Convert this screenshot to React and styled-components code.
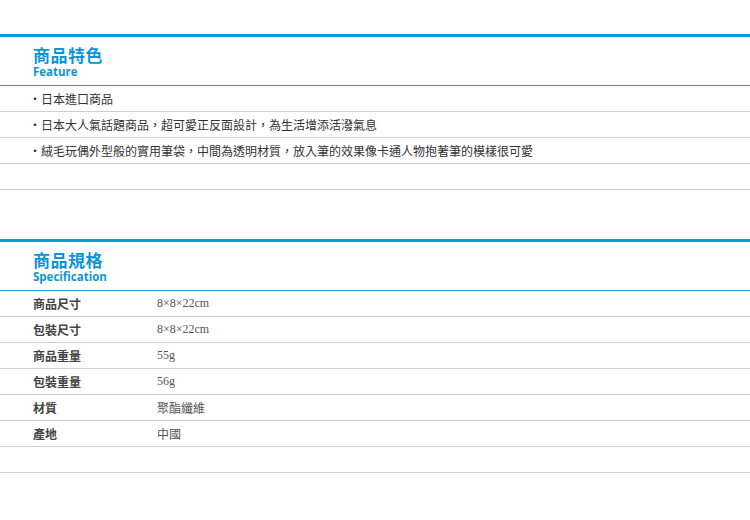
import React from "react";
import styled, { createGlobalStyle } from "styled-components";

const G = createGlobalStyle`
  body { margin: 0; background: #fff; font-family: "Noto Sans CJK TC", "Noto Sans", sans-serif; }
`;
const Wrap = styled.div` padding-top: 34px; `;
const Section = styled.section` margin-bottom: ${p => p.$mb}px; `;
const Head = styled.div`
  border-top: 3px solid #0a9bdc;
  border-bottom: 1px solid #1a9bd6;
  height: 48px;
  padding-left: 33px;
  display: flex; flex-direction: column; justify-content: center;
  color: #0a95d8;
`;
const Title = styled.div` font-size: 17px; font-weight: 700; line-height: 21px; letter-spacing: 0.5px; `;
const Sub = styled.div` font-size: 11.5px; font-weight: 700; line-height: 14px; font-family: "Open Sans", "Noto Sans", sans-serif; `;
const Row = styled.div`
  height: 25px; border-bottom: 1px solid #cfcfcf;
  display: flex; align-items: center; padding-left: ${p => p.$pl}px;
  font-size: 12px; color: #333;
`;
const Label = styled.div` width: 124px; font-weight: 700; color: #444; `;
const Value = styled.div` font-family: ${p => p.$serif ? '"Liberation Serif", serif' : '"Noto Sans CJK TC", sans-serif'}; color: #555; font-size: 12px; `;

const feats = ["日本進口商品", "日本大人氣話題商品，超可愛正反面設計，為生活增添活潑氣息", "絨毛玩偶外型般的實用筆袋，中間為透明材質，放入筆的效果像卡通人物抱著筆的模樣很可愛"];
const specs = [["商品尺寸", "8×8×22cm", 1], ["包裝尺寸", "8×8×22cm", 1], ["商品重量", "55g", 1], ["包裝重量", "56g", 1], ["材質", "聚酯纖維"], ["產地", "中國"]];

export default function App() {
  return (
    <Wrap>
      <G />
      <Section $mb={49}>
        <Head><Title>商品特色</Title><Sub>Feature</Sub></Head>
        {feats.map(f => <Row key={f} $pl={29}>‧{f}</Row>)}
        <Row $pl={29} />
      </Section>
      <Section>
        <Head><Title>商品規格</Title><Sub>Specification</Sub></Head>
        {specs.map(([l, v, s]) => <Row key={l} $pl={33}><Label>{l}</Label><Value $serif={s}>{v}</Value></Row>)}
        <Row $pl={33} />
      </Section>
    </Wrap>
  );
}
